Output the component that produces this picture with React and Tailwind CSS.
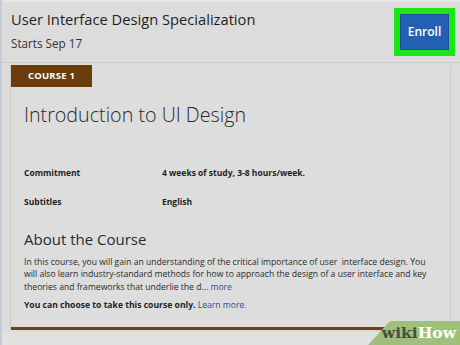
export default function App() {
  const font = { fontFamily: '"Open Sans", "Noto Sans", sans-serif' };
  return (
    <div className="relative w-[460px] h-[345px] overflow-hidden bg-[#dcdcdc] text-[#222]" style={font}>
      <div className="absolute left-0 top-0 bottom-0 w-[2px] bg-[#c3ccd8]" />
      <div className="h-[2px] bg-[#e6e6e6]" />
      {/* header */}
      <div className="flex items-start justify-between pl-[11px] pr-[5px] pt-[6px] h-[61px] border-b border-[#c9c9c9]">
        <div>
          <div className="text-[14.7px] leading-[22px] text-[#1f1f1f]">User Interface Design Specialization</div>
          <div className="text-[11.7px] leading-[18px] mt-[4px] text-[#333]">Starts Sep 17</div>
        </div>
        <div className="p-[6px] bg-[#1ee51a] mt-[0px]">
          <div className="w-[49px] h-[36px] bg-[#2360b4] border border-[#1b4f98] flex items-center justify-center text-white text-[12px] font-semibold">
            Enroll
          </div>
        </div>
      </div>
      {/* card */}
      <div className="ml-[10px] mr-[9px] mt-[2px] border-l border-r border-[#cbcbcb] bg-[#dddddd]">
        <div className="w-[81px] h-[22px] bg-[#6a3d0b] text-white text-[9.5px] font-bold flex items-center justify-center tracking-[0.2px]">
          COURSE 1
        </div>
        <div className="pl-[13px] pr-[22px]">
          <div className="text-[19.7px] font-light leading-[30px] mt-[13px] text-[#2a2a2a]">Introduction to UI Design</div>
          <div className="flex text-[8.5px] font-bold mt-[37px] leading-[12px] text-[#1f1f1f]">
            <div className="w-[138px]">Commitment</div>
            <div>4 weeks of study, 3-8 hours/week.</div>
          </div>
          <div className="flex text-[8.5px] font-bold mt-[17px] leading-[12px] text-[#1f1f1f]">
            <div className="w-[138px]">Subtitles</div>
            <div>English</div>
          </div>
          <div className="text-[15px] leading-[20px] mt-[21px] text-[#2a2a2a]">About the Course</div>
          <div className="text-[8.6px] leading-[12.4px] mt-[7px] text-[#2a2a2a]">
            In this course, you will gain an understanding of the critical importance of user&nbsp; interface design. You will also learn industry-standard methods for how to approach the design of a user interface and key theories and frameworks that underlie the d... <span className="text-[#1f4f9a]">more</span>
          </div>
          <div className="text-[8.6px] leading-[12px] mt-[6px] text-[#1f1f1f]">
            <span className="font-bold">You can choose to take this course only.</span>{" "}
            <span className="text-[#1f4f9a]">Learn more.</span>
          </div>
          <div className="h-[16px]" />
        </div>
        <div className="h-[3px] bg-[#6b4318]" />
      </div>
      <div className="mt-[3px] h-[20px] bg-[#e2e2e2]" />
      {/* wikiHow watermark */}
      <div className="absolute right-0 bottom-0 w-[92px] h-[24px]">
        <svg width="92" height="24" className="absolute inset-0">
          <polygon points="22,0 92,0 92,24 0,24" fill="#9fc07a" />
        </svg>
        <div className="absolute right-[4px] bottom-[2px] text-[15.5px] font-bold leading-[20px]" style={{ fontFamily: '"DejaVu Serif", serif' }}>
          <span className="text-[#4a4a4a]">wiki</span><span className="text-white">How</span>
        </div>
      </div>
    </div>
  );
}
